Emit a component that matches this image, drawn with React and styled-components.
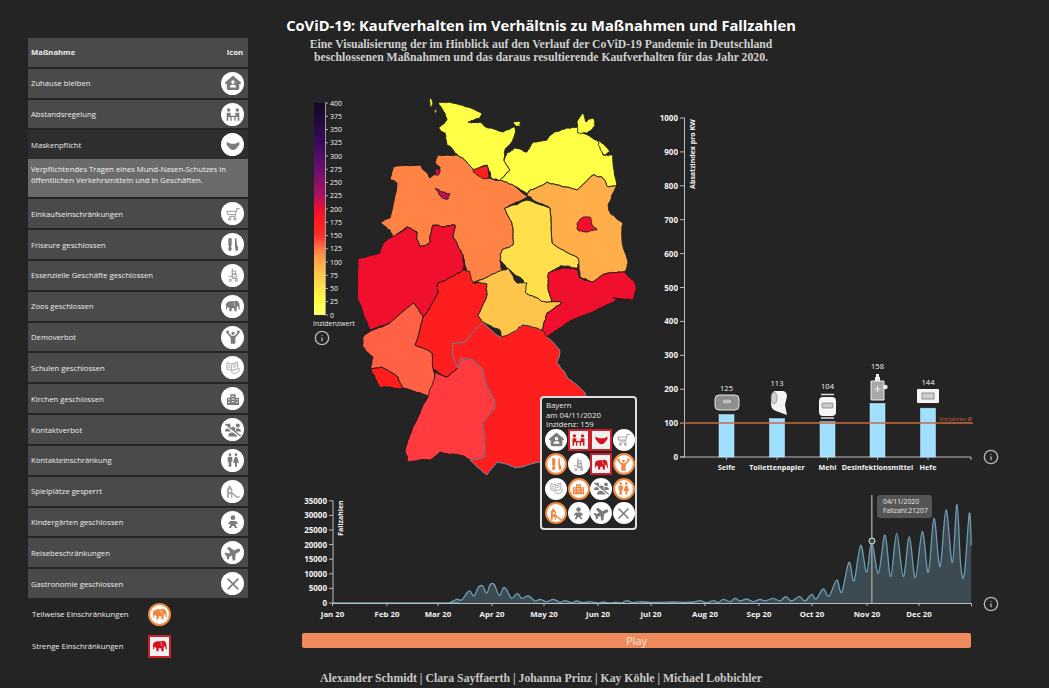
import React from 'react'
import styled, { createGlobalStyle } from 'styled-components'
import { Info } from 'lucide-react'
import { FaHouseUser, FaUsersSlash, FaPlane } from 'react-icons/fa6'
import { MdWc } from 'react-icons/md'

const Global = createGlobalStyle`
  html,body{margin:0;padding:0;background:#242424;}
  body{font-family:"Open Sans","Liberation Sans",sans-serif;}
`

/* ---------- icons ---------- */
const Svg = ({ children, ...p }) => (
  <svg viewBox="0 0 24 24" width="1em" height="1em" fill="currentColor" {...p}>{children}</svg>
)
const Distance = () => (
  <Svg>
    <circle cx="5.500" cy="6" r="2.600" /><circle cx="18.500" cy="6" r="2.600" />
    <path d="M2.500 10h6v4.500h7V10h6v12h-2.500v-5.500H16V22h-2v-5.500h-4V22H8v-5.500H5V22H2.500z" />
  </Svg>
)
const Mask = () => (
  <Svg>
    <path d="M2.500 7c3 2 5.500 3 9.500 3s6.500-1 9.500-3v3.500c0 2-1 3-2.500 3.800-1.200 3-4 5.200-7 5.200s-5.800-2.200-7-5.200c-1.500-.8-2.500-1.800-2.500-3.800z" />
  </Svg>
)
const Cart = () => (
  <Svg fill="none" stroke="currentColor" strokeWidth="1.800">
    <path d="M22 4h-4l-3 12H6" /><path d="M16.500 8H3l1.500 5H15" />
    <circle cx="7" cy="19.500" r="1.600" /><circle cx="15" cy="19.500" r="1.600" />
  </Svg>
)
const Hair = () => (
  <Svg>
    <path d="M5 2h5v11H9v2c1.500 1 1.500 6-1.500 6S4.500 16 6 15v-2H5z" />
    <path d="M15 2h2l1 10 1.500 3c1 2 0 6-2 6s-2.500-3-1.500-5h-1v-2z" />
  </Svg>
)
const Trolley = () => (
  <Svg fill="none" stroke="currentColor" strokeWidth="1.700">
    <path d="M11 2v15h8" /><path d="M11 6h5v4h-5zM11 11h6v4h-6z" /><path d="M5 14h6" />
    <circle cx="8" cy="20" r="1.600" /><circle cx="17" cy="20" r="1.600" />
  </Svg>
)
const Elephant = () => (
  <Svg>
    <path d="M1.500 17V10c0-3 3.500-5 7.500-5h4.500c2-1.500 6-1 7.500 2.500.8 2 .8 6 1.500 9.500h-1.500c-.7-2-1-4-1.800-5l-1.700 2v6h-3.500v-4.500H10V20H6.500v-5L3 13.500V17z" />
    <path d="M14 6c-1 3 0 5 2.500 6" fill="none" stroke="#fff" strokeWidth=".8" />
  </Svg>
)
const Demo = () => (
  <Svg>
    <circle cx="12" cy="6.500" r="2.300" /><circle cx="4" cy="4.500" r="2.200" /><circle cx="20" cy="4.500" r="2.200" />
    <path d="M9.500 10h5l5-5 1.500 1.500L15.500 13v9h-7v-9L3 6.500 4.500 5z" />
  </Svg>
)
const Books = () => (
  <Svg fill="none" stroke="currentColor" strokeWidth="1.500">
    <path d="M3 4l7 2 9-3v10l-9 3-7-2z" /><path d="M10 6v10M5 8l3 1M5 11l3 1M12 8l5-2M12 11l5-2" />
    <path d="M9 18c3 3 7 3 12-1v-5" />
  </Svg>
)
const Building = () => (
  <Svg>
    <path fillRule="evenodd" d="M3 21V10h5V5h8v5h5v11zM5 12v2h2v-2zM5 16v2h2v-2zM10 7v2h1.500V7zM12.500 7v2H14V7zM10 11v2h1.500v-2zM12.500 11v2H14v-2zM10 15v2h1.500v-2zM12.500 15v2H14v-2zM17 12v2h2v-2zM17 16v2h2v-2z" />
  </Svg>
)
const Slide = () => (
  <Svg>
    <path d="M3 22V9l4-6 4 6v5l7 6h4v2h-5l-6-5v5H9v-5H6v5zM6 10v3h3v-3z" />
  </Svg>
)
const Baby = () => (
  <Svg>
    <circle cx="12" cy="5.500" r="3.600" />
    <path d="M8 10.500h8l3.500 3.500-1.700 1.700-1.800-1.800V17l2.500 4h-3.500l-1.500-3h-3L9 21H5.500L8 17v-3.100l-1.800 1.800L4.500 14z" />
  </Svg>
)
const Plane = styled(FaPlane)`transform:rotate(-25deg);`
const Cutlery = () => (
  <Svg fill="none" stroke="currentColor" strokeWidth="2.400">
    <path d="M4 4l16 16M20 4L4 20" />
  </Svg>
)

const ICONS = {
  home: FaHouseUser, distance: Distance, mask: Mask, cart: Cart, hair: Hair, trolley: Trolley,
  elephant: Elephant, demo: Demo, books: Books, building: Building, nocontact: FaUsersSlash,
  couple: MdWc, slide: Slide, baby: Baby, plane: Plane, cutlery: Cutlery,
}
const LIGHT = ['cart', 'trolley', 'books', 'slide']

const LEVEL_COLOR = { none: '#7b7b7b', partial: '#f2873f', strict: '#d3141f' }

const BadgeBox = styled.span`
  display:flex;align-items:center;justify-content:center;flex:none;box-sizing:border-box;
  width:${p => p.$size}px;height:${p => p.$size}px;
  font-size:${p => Math.round(p.$size * 0.7)}px;
  background:${p => (p.$level === 'strict' ? '#f1f1f1' : '#fff')};
  color:${p => (p.$light ? '#aaa' : LEVEL_COLOR[p.$level])};
  border-radius:${p => (p.$level === 'strict' ? '0' : '50%')};
  border:${p => (p.$level === 'partial' ? '2px solid #f2873f' : p.$level === 'strict' ? '2px solid #c9202a' : 'none')};
`
const Badge = ({ icon, level = 'none', size = 23 }) => {
  const Icon = ICONS[icon]
  return (
    <BadgeBox $size={size} $level={level} $light={level === 'none' && LIGHT.includes(icon)}>
      <Icon />
    </BadgeBox>
  )
}

/* ---------- sidebar ---------- */
const MEASURES = [
  ['Zuhause bleiben', 'home'],
  ['Abstandsregelung', 'distance'],
  ['Maskenpflicht', 'mask'],
  ['Einkaufseinschränkungen', 'cart'],
  ['Friseure geschlossen', 'hair'],
  ['Essenzielle Geschäfte geschlossen', 'trolley'],
  ['Zoos geschlossen', 'elephant'],
  ['Demoverbot', 'demo'],
  ['Schulen geschlossen', 'books'],
  ['Kirchen geschlossen', 'building'],
  ['Kontaktverbot', 'nocontact'],
  ['Kontakteinschränkung', 'couple'],
  ['Spielplätze gesperrt', 'slide'],
  ['Kindergärten geschlossen', 'baby'],
  ['Reisebeschränkungen', 'plane'],
  ['Gastronomie geschlossen', 'cutlery'],
]

const Page = styled.div`
  display:flex;width:1049px;height:688px;overflow:hidden;background:#242424;color:#e6e6e6;
`
const Sidebar = styled.aside`
  flex:none;width:220px;margin-left:28px;padding-top:38px;display:flex;flex-direction:column;gap:2px;
`
const Row = styled.div`
  display:flex;align-items:center;justify-content:space-between;height:28.830px;padding:0 4px 0 3px;
  background:${p => (p.$open ? '#2e2e2e' : '#4a4a4a')};
  font-size:7.700px;font-weight:${p => (p.$head ? 700 : 400)};color:#ececec;
`
const HeadIcon = styled.span`padding-right:1px;`
const Detail = styled.div`
  margin-top:-2px;height:38px;box-sizing:border-box;padding:5px 3px 0;background:#6b6b6b;
  font-size:7.700px;line-height:10.500px;color:#f0f0f0;
`
const Key = styled.div`
  display:flex;align-items:center;height:32px;font-size:7.700px;color:#ececec;
`
const KeyLabel = styled.span`width:116px;padding-left:4px;`
const KeyList = styled.div`margin-top:-2px;display:flex;flex-direction:column;`

/* ---------- main ---------- */
const Main = styled.main`flex:1;min-width:0;display:flex;flex-direction:column;`
const Header = styled.header`
  width:586px;height:92px;box-sizing:border-box;padding-top:16px;text-align:center;
`
const Title = styled.h1`
  margin:0;font-size:14.700px;line-height:19px;font-weight:700;color:#fff;white-space:nowrap;
`
const Subtitle = styled.p`
  margin:3px 0 0;font-family:"Liberation Serif",serif;font-weight:700;font-size:11.720px;line-height:13px;color:#cfcfcf;white-space:nowrap;
`
const Charts = styled.section`display:flex;height:398px;margin-left:52px;`
const ScaleColumn = styled.div`flex:none;width:58px;`
const ScaleCaption = styled.div`
  margin:1px 0 0 13px;font-size:7px;line-height:9px;color:#e6e6e6;
`
const InfoMark = styled(Info)`
  flex:none;display:block;color:#b5b5b5;width:16px;height:16px;
  margin:${p => p.$margin};
`
const MapWrap = styled.div`position:relative;flex:none;width:292px;height:398px;`
const BarWrap = styled.div`display:flex;align-items:flex-end;`
const Tip = styled.div`
  position:absolute;left:182px;top:304px;width:97px;height:134px;box-sizing:border-box;
  padding:3px 3px 0 3px;background:#242424;border:2px solid #dedede;border-radius:4px;
  font-size:7.800px;line-height:9.500px;color:#e8e8e8;
`
const TipText = styled.div`padding-left:1px;`
const TipGrid = styled.div`
  display:grid;grid-template-columns:repeat(4,22px);column-gap:.6px;row-gap:2.500px;margin-top:-1px;
`
const TimelineWrap = styled.div`position:relative;display:flex;align-items:flex-end;margin-left:52px;`
const CaseTip = styled.div`
  position:absolute;left:577px;top:5px;width:55px;height:23px;box-sizing:border-box;padding:2px 0 0 6px;
  background:#555;border-radius:3px;font-size:6.800px;line-height:9px;color:#e8e8e8;
`
const Play = styled.button`
  display:block;width:669px;height:15px;margin:8px 0 0 54px;padding:0;border:0;border-radius:2px;
  background:#ef8a5c;color:#fbe3d8;font:400 11px/15px "Open Sans",sans-serif;
`
const Footer = styled.footer`
  width:586px;margin-top:24px;text-align:center;white-space:nowrap;
  font-family:"Liberation Serif",serif;font-weight:700;font-size:11.770px;line-height:14px;color:#c9c9c9;
`
const Chart = styled.svg`flex:none;display:block;`
const Label = styled.text`
  font-size:${p => p.$size || 8}px;font-weight:${p => (p.$bold ? 700 : 400)};
  fill:${p => p.$color || '#f4f4f4'};text-anchor:${p => p.$anchor || 'middle'};
`

/* ---------- map ---------- */
const hash = (x, y, k) => {
  const s = Math.sin(x * 12.9898 + y * 78.233 + k) * 43758.5453
  return s - Math.floor(s) - 0.5
}
// midpoint noise gives the jagged borders; same edge gives same noise in both states
const rough = (pts) => {
  let out = pts
  ;[1.8, 1.3, 0.9].forEach((amp) => {
    const next = []
    out.forEach((a, i) => {
      const b = out[(i + 1) % out.length]
      const mx = (a[0] + b[0]) / 2
      const my = (a[1] + b[1]) / 2
      next.push(a, [mx + hash(mx, my, 1) * amp, my + hash(mx, my, 2) * amp])
    })
    out = next
  })
  return 'M' + out.map((p) => p[0].toFixed(1) + ' ' + p[1].toFixed(1)).join('L') + 'Z'
}

const DARK = '#1c1c1c'
const BLUE = '#6f97ae'
const STATES = [
  ['#ff8345', DARK, [[437,155],[457,155],[463,158],[475,170],[487,178],[500,180],[513,185],[528,197],[505,208],[512,223],[513,245],[502,250],[500,260],[502,270],[497,272],[480,280],[472,283],[467,272],[463,255],[453,237],[455,225],[443,227],[433,225],[430,237],[430,243],[420,247],[417,240],[417,232],[407,227],[393,237],[390,230],[380,223],[390,218],[397,183],[390,180],[393,167],[420,165],[430,178],[440,168],[435,162]]],
  ['#ffff45', DARK, [[438,102],[448,102],[467,107],[482,113],[480,118],[468,122],[480,122],[488,128],[503,132],[515,127],[513,140],[505,150],[504,160],[510,170],[500,180],[491,178],[487,165],[475,170],[463,158],[455,153],[447,145],[445,133],[438,128],[447,120],[443,110]]],
  ['#ffff45', DARK, [[513,122],[520,122],[520,126],[515,126]]],
  ['#ffff45', DARK, [[431,95],[433,103],[430,108]]],
  ['#ffff45', DARK, [[433,110],[438,110],[435,114]]],
  ['#ffff45', DARK, [[500,180],[510,170],[504,160],[507,153],[515,148],[527,152],[533,142],[547,140],[555,132],[567,128],[577,127],[583,133],[597,140],[603,155],[612,155],[613,162],[617,185],[608,187],[602,177],[593,175],[577,190],[563,187],[547,182],[530,190],[527,194],[513,185]]],
  ['#ffff45', DARK, [[577,123],[583,113],[586,122],[593,118],[595,125],[587,133],[578,133]]],
  ['#ffff45', DARK, [[598,140],[610,152],[605,155],[600,148]]],
  ['#ffae4a', DARK, [[527,195],[530,190],[547,182],[563,187],[577,190],[593,175],[602,177],[608,187],[617,185],[608,205],[610,213],[623,223],[622,240],[628,263],[625,272],[608,273],[593,282],[580,277],[578,258],[552,243],[550,208],[533,200]]],
  ['#ffe04c', DARK, [[505,208],[527,200],[550,208],[552,243],[578,258],[578,268],[560,266],[550,272],[548,285],[552,302],[540,300],[525,292],[523,280],[510,270],[500,260],[502,250],[513,245],[512,223]]],
  ['#f0102e', DARK, [[358,258],[380,253],[383,243],[407,227],[417,232],[417,240],[420,247],[430,243],[430,237],[433,225],[443,227],[455,225],[453,237],[463,255],[463,270],[450,278],[438,283],[438,293],[423,317],[413,303],[390,323],[370,330],[363,313],[357,297]]],
  ['#ff1e1e', DARK, [[438,283],[450,278],[463,270],[470,272],[473,283],[487,284],[487,295],[478,315],[483,322],[465,342],[452,343],[452,355],[458,368],[447,377],[433,368],[432,353],[415,345],[423,317],[438,293]]],
  ['#ff6145', DARK, [[413,303],[423,317],[415,345],[432,353],[433,368],[435,380],[430,397],[403,388],[398,377],[382,367],[370,368],[373,357],[363,347],[363,337],[373,330],[390,323]]],
  ['#ff1e1e', DARK, [[370,368],[382,367],[398,377],[403,388],[393,388],[380,387],[375,377]]],
  ['#ff3b40', DARK, [[435,373],[447,377],[458,368],[460,358],[473,360],[483,370],[487,387],[495,400],[495,408],[482,423],[485,457],[470,460],[460,455],[440,452],[430,460],[407,462],[405,450],[413,427],[428,397],[433,383]]],
  ['#ff1e1e', BLUE, [[483,322],[500,337],[517,330],[523,325],[542,330],[547,337],[560,350],[557,363],[567,377],[585,393],[600,420],[600,440],[570,460],[540,462],[515,468],[497,462],[487,475],[470,460],[485,457],[482,423],[495,408],[495,400],[487,387],[483,370],[473,360],[460,358],[458,368],[452,355],[452,343],[465,342]]],
  ['#ffc44a', DARK, [[480,280],[497,272],[502,270],[508,268],[517,283],[527,283],[525,292],[540,300],[552,302],[562,303],[547,313],[542,330],[523,325],[517,330],[502,337],[500,330],[483,322],[478,315],[487,295],[487,284],[473,283]]],
  ['#f0102e', DARK, [[548,273],[563,268],[578,270],[580,278],[593,282],[608,273],[625,272],[635,283],[636,290],[633,300],[613,298],[627,307],[617,300],[597,310],[567,323],[547,337],[542,330],[547,313],[562,303],[552,302],[548,285]]],
  ['#c21058', DARK, [[435,188],[443,192],[450,193],[448,199],[442,197]]],
  ['#c21058', DARK, [[435,169],[440,169],[439,175],[435,175]]],
  ['#ff1e1e', DARK, [[473,170],[487,165],[489,178],[482,178],[475,173]]],
  ['#f0102e', DARK, [[577,223],[582,218],[590,217],[592,225],[597,230],[587,232],[578,230]]],
]

const GermanyMap = () => (
  <Chart width="292" height="398" viewBox="358 92 292 398">
    {STATES.map(([fill, stroke, pts], i) => (
      <path key={i} d={rough(pts)} fill={fill} stroke={stroke} strokeWidth=".9" strokeLinejoin="round" />
    ))}
  </Chart>
)

const SCALE_STOPS = [
  [0, '#ffff70'], [25, '#ffff45'], [50, '#ffe64c'], [100, '#ffa94a'], [125, '#ff7a45'], [150, '#ff2d2d'],
  [175, '#ff1e1e'], [200, '#e8102f'], [225, '#b01060'], [275, '#6a0f70'], [325, '#3a0a5a'], [400, '#120826'],
]
const scaleY = (v) => 315 - (v / 400) * 212
const ColorScale = () => (
  <Chart width="58" height="226" viewBox="300 92 58 226">
    <defs>
      <linearGradient id="inc" x1="0" y1="1" x2="0" y2="0">
        {SCALE_STOPS.map(([v, c]) => <stop key={v} offset={v / 400} stopColor={c} />)}
      </linearGradient>
    </defs>
    <rect x="314" y="103" width="11" height="212" fill="url(#inc)" />
    <path d="M325.500 103V315" stroke="#bbb" strokeWidth=".8" />
    {Array.from({ length: 17 }, (_, i) => i * 25).map((v) => (
      <g key={v}>
        <path d={`M325 ${scaleY(v)}h3`} stroke="#ccc" strokeWidth=".8" />
        <Label x="330" y={scaleY(v) + 2.500} $size={7} $anchor="start">{v}</Label>
      </g>
    ))}
  </Chart>
)

/* ---------- bar chart ---------- */
const PRODUCTS = [
  ['Seife', 125, 726.5, 391],
  ['Toilettenpapier', 113, 777, 386],
  ['Mehl', 104, 827.5, 389],
  ['Desinfektionsmittel', 158, 877.5, 368.500],
  ['Hefe', 144, 928, 384.500],
]
const barY = (v) => 457 - v * 0.339

const ProductArt = () => (
  <g>
    {/* soap */}
    <rect x="715" y="395" width="24" height="15" rx="4" fill="#8e8e8e" stroke="#e6e6e6" />
    <rect x="722" y="399" width="10" height="5" rx="2" fill="#bdbdbd" stroke="#666" strokeWidth=".6" />
    {/* toilet roll */}
    <path d="M771 403c0 6 3 7 5 8l11 4-2-10 2-9c0-3-2-5-5-5h-7c-3 0-4 5-4 12z" fill="#f4f4f4" />
    <ellipse cx="774" cy="398" rx="3" ry="6" fill="#cfcfcf" stroke="#666" strokeWidth=".5" />
    {/* flour */}
    <rect x="819" y="397" width="17" height="19" rx="4" fill="#f6f6f6" />
    <path d="M821 394.500h13M821 418h13" stroke="#ddd" strokeWidth="1.400" />
    <rect x="822" y="403" width="11" height="5" rx="1" fill="#ccc" stroke="#666" strokeWidth=".6" />
    {/* sanitizer */}
    <path d="M871 381h13v19h-13z" fill="#a8a8a8" stroke="#eee" />
    <path d="M875 377h5v4h-5zM876 374h3v3h-3z" fill="#eee" />
    <circle cx="885.500" cy="387" r="2.200" fill="#eee" />
    <path d="M877.500 386v6M874.500 389h6" stroke="#ececec" strokeWidth="1" />
    {/* yeast */}
    <rect x="917" y="389" width="22" height="14" rx="1" fill="#f6f6f6" />
    <rect x="922" y="393" width="12" height="6" fill="#cfcfcf" stroke="#555" strokeWidth=".6" />
  </g>
)

const BarChart = () => (
  <Chart width="335" height="398" viewBox="650 92 335 398">
    {[0, 100, 200, 300, 400, 500, 600, 700, 800, 900, 1000].map((v) => (
      <g key={v}>
        <path d={`M680 ${barY(v)}h5`} stroke="#bbb" />
        <Label x="678" y={barY(v) + 3} $bold $anchor="end">{v}</Label>
      </g>
    ))}
    <path d="M684.500 118V457M680 457H971v3" fill="none" stroke="#bbb" />
    <Label transform="translate(695 154) rotate(-90)" $bold $size={7}>Absatzindex pro KW</Label>
    {PRODUCTS.map(([name, v, x, labelY]) => (
      <g key={name}>
        <rect x={x - 7.500} y={barY(v)} width="15" height={457 - barY(v)} fill="#9fdfff" stroke="#cfeeff" strokeWidth=".5" />
        <path d={`M${x} 457v3`} stroke="#bbb" />
        <Label x={x} y={labelY} $size={7.500}>{v}</Label>
        <Label x={x} y="470" $bold $size={7.200}>{name}</Label>
      </g>
    ))}
    <ProductArt />
    <path d="M684 423H973" stroke="#c86a45" strokeWidth="1.300" />
    <Label x="972" y="421" $size={6} $anchor="end" $color="#c9623a">Vorjahres Ø</Label>
  </Chart>
)

/* ---------- timeline ---------- */
const SPRING = [[480,338],[500,328],[515,330],[530,310],[540,303],[552,318],[565,292],[578,288],[590,310],[600,285],[612,283],[628,316],[640,293],[650,300],[665,325],[682,310],[695,325],[715,318],[735,333],[750,328],[770,335],[790,328],[810,337],[825,332],[845,338],[860,333],[880,338],[900,335],[925,339],[940,336],[960,339],[975,337],[995,339],[1010,332],[1030,338],[1050,335],[1075,338]]
const AUTUMN = [[0,350],[30,352],[60,352],[100,351],[130,352],[160,351],[180,347],[200,353],[220,347],[235,352],[250,343],[270,350],[285,340],[300,348],[320,342],[340,350],[360,343],[375,348],[400,340],[420,348],[437,335],[455,348],[478,334],[495,348],[515,328],[528,342],[550,312],[567,334],[590,285],[605,322],[627,232],[642,288],[662,181],[680,262],[695,170],[715,265],[735,150],[752,275],[770,145],[790,275],[808,155],[826,278],[847,140],[865,262],[882,100],[900,245],[918,75],[937,232],[951,58],[962,240],[973,268],[988,85],[994,182]]
const CURVE = [
  [333, 603], [450, 603],
  ...SPRING.map(([x, y]) => [290 + x / 3, 490 + y / 3]),
  ...AUTUMN.map(([x, y]) => [640 + x / 3, 485 + y / 3]),
]
const smooth = (p) => {
  let d = `M${p[0][0]} ${p[0][1]}`
  for (let i = 0; i < p.length - 1; i++) {
    const a = p[i - 1] || p[i]
    const b = p[i]
    const c = p[i + 1]
    const e = p[i + 2] || c
    const c1 = [b[0] + (c[0] - a[0]) / 6, b[1] + (c[1] - a[1]) / 6]
    const c2 = [c[0] - (e[0] - b[0]) / 6, c[1] - (e[1] - b[1]) / 6]
    d += `C${c1[0].toFixed(1)} ${Math.min(c1[1], 603).toFixed(1)} ${c2[0].toFixed(1)} ${Math.min(c2[1], 603).toFixed(1)} ${c[0].toFixed(1)} ${c[1].toFixed(1)}`
  }
  return d
}
const MONTHS = [['Jan',332.500],['Feb',387],['Mar',438],['Apr',492],['May',544],['Jun',598],['Jul',651],['Aug',705],['Sep',759],['Oct',812],['Nov',867],['Dec',919]]
const LINE = smooth(CURVE)

const Timeline = () => (
  <Chart width="685" height="135" viewBox="300 490 685 135">
    <path d={`${LINE}V603H333Z`} fill="#3c4a52" />
    <path d={LINE} fill="none" stroke="#6b9db6" strokeWidth="1.300" />
    {[0, 5000, 10000, 15000, 20000, 25000, 30000, 35000].map((v) => (
      <g key={v}>
        <path d={`M329 ${603 - v * 0.00292}h4`} stroke="#bbb" />
        <Label x="327" y={603 - v * 0.00292 + 3} $bold $anchor="end">{v}</Label>
      </g>
    ))}
    <path d="M333 500.500V603.500H971.500v3" fill="none" stroke="#bbb" />
    {MONTHS.map(([m, x]) => (
      <g key={m}>
        <path d={`M${x} 603v3`} stroke="#bbb" />
        <Label x={x} y="617" $bold $size={7.800}>{m} 20</Label>
      </g>
    ))}
    <Label transform="translate(343 518) rotate(-90)" $bold $size={7}>Fallzahlen</Label>
    <path d="M871.800 495V603" stroke="#9a9a9a" strokeWidth="1.500" />
    <circle cx="872" cy="541" r="3" fill="#3c4a52" stroke="#e6e6e6" />
  </Chart>
)

const TIP_ICONS = [
  ['home', 'none'], ['distance', 'strict'], ['mask', 'strict'], ['cart', 'none'],
  ['hair', 'partial'], ['trolley', 'none'], ['elephant', 'strict'], ['demo', 'partial'],
  ['books', 'none'], ['building', 'partial'], ['nocontact', 'none'], ['couple', 'partial'],
  ['slide', 'partial'], ['baby', 'none'], ['plane', 'none'], ['cutlery', 'none'],
]

export default function App() {
  return (
    <Page>
      <Global />
      <Sidebar>
        <Row $head>
          <span>Maßnahme</span>
          <HeadIcon>Icon</HeadIcon>
        </Row>
        {MEASURES.map(([name, icon]) => (
          <React.Fragment key={name}>
            <Row $open={icon === 'mask'}>
              <span>{name}</span>
              <Badge icon={icon} />
            </Row>
            {icon === 'mask' && (
              <Detail>
                Verpflichtendes Tragen eines Mund-Nasen-Schutzes in<br />
                öffentlichen Verkehrsmitteln und in Geschäften.
              </Detail>
            )}
          </React.Fragment>
        ))}
        <KeyList>
          <Key>
            <KeyLabel>Teilweise Einschränkungen</KeyLabel>
            <Badge icon="elephant" level="partial" />
          </Key>
          <Key>
            <KeyLabel>Strenge Einschränkungen</KeyLabel>
            <Badge icon="elephant" level="strict" />
          </Key>
        </KeyList>
      </Sidebar>
      <Main>
        <Header>
          <Title>CoViD-19: Kaufverhalten im Verhältnis zu Maßnahmen und Fallzahlen</Title>
          <Subtitle>
            Eine Visualisierung der im Hinblick auf den Verlauf der CoViD-19 Pandemie in Deutschland<br />
            beschlossenen Maßnahmen und das daraus resultierende Kaufverhalten für das Jahr 2020.
          </Subtitle>
        </Header>
        <Charts>
          <ScaleColumn>
            <ColorScale />
            <ScaleCaption>Inzidenzwert</ScaleCaption>
            <InfoMark $margin="2px 0 0 14px" />
          </ScaleColumn>
          <MapWrap>
            <GermanyMap />
            <Tip>
              <TipText>Bayern<br />am 04/11/2020<br />Inzidenz: 159</TipText>
              <TipGrid>
                {TIP_ICONS.map(([icon, level]) => <Badge key={icon} icon={icon} level={level} size={22} />)}
              </TipGrid>
            </Tip>
          </MapWrap>
          <BarWrap>
            <BarChart />
            <InfoMark $margin="0 0 25px -2px" />
          </BarWrap>
        </Charts>
        <TimelineWrap>
          <Timeline />
          <InfoMark $margin="0 0 13px -2px" />
          <CaseTip>04/11/2020<br />Fallzahl:21207</CaseTip>
        </TimelineWrap>
        <Play>Play</Play>
        <Footer>Alexander Schmidt | Clara Sayffaerth | Johanna Prinz | Kay Köhle | Michael Lobbichler</Footer>
      </Main>
    </Page>
  )
}
